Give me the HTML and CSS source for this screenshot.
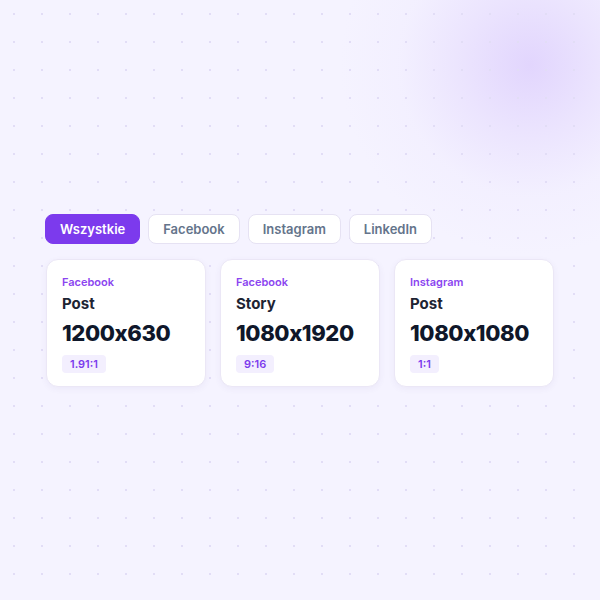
FILE: index.html
```html
<!DOCTYPE html>
<html lang="pl">
<head>
    <meta charset="UTF-8">
    <meta name="viewport" content="width=device-width, initial-scale=1.0">
    <title>Formaty grafik</title>
    <link rel="stylesheet" href="styles.css">
</head>
<body>
    <div class="container">
        <!-- Platform filter -->
        <div class="tabs">
            <button class="tab active">Wszystkie</button>
            <button class="tab">Facebook</button>
            <button class="tab">Instagram</button>
            <button class="tab">LinkedIn</button>
        </div>

        <!-- Format cards -->
        <div class="cards">
            <div class="card">
                <div class="platform">Facebook</div>
                <div class="kind">Post</div>
                <div class="size">1200x630</div>
                <span class="ratio">1.91:1</span>
            </div>
            <div class="card">
                <div class="platform">Facebook</div>
                <div class="kind">Story</div>
                <div class="size">1080x1920</div>
                <span class="ratio">9:16</span>
            </div>
            <div class="card">
                <div class="platform">Instagram</div>
                <div class="kind">Post</div>
                <div class="size">1080x1080</div>
                <span class="ratio">1:1</span>
            </div>
        </div>
    </div>
</body>
</html>
```

FILE: styles.css
```css
/* General styling */
body {
    font-family: 'Inter', 'Liberation Sans', sans-serif;
    background-color: #f5f3ff;
    /* dotted grid plus a soft glow in the top-right corner */
    background-image:
        radial-gradient(circle, #e2ddf6 1px, transparent 1.5px),
        radial-gradient(circle at 530px 65px, rgba(221, 206, 253, 0.8) 0px, rgba(226, 214, 253, 0.5) 70px, rgba(236, 230, 254, 0.25) 130px, rgba(245, 243, 255, 0) 190px);
    background-size: 28px 28px, 100% 100%;
    display: flex;
    justify-content: center;
    align-items: center;
    height: 100vh;
    margin: 0;
}

.container {
    width: 510px;
    padding-top: 1px;
}

/* Tabs */
.tabs {
    display: flex;
    gap: 8px;
    margin-bottom: 15px;
}

.tab {
    font-family: inherit;
    font-size: 13px;
    font-weight: 600;
    line-height: 16px;
    padding: 6px 14px;
    border: 1px solid #e6e2f3;
    border-radius: 8px;
    background-color: #ffffff;
    color: #64748b;
    cursor: pointer;
}

.tab.active {
    background-color: #7c3aed;
    border-color: #7c3aed;
    color: #ffffff;
}

/* Cards */
.cards {
    display: grid;
    grid-template-columns: repeat(3, 1fr);
    gap: 14px;
    margin: 0 1px;
}

.card {
    background-color: #ffffff;
    border: 1px solid #ebe7f6;
    border-radius: 12px;
    padding: 15px 15px 13px;
    box-shadow: 0 2px 6px rgba(91, 60, 160, 0.06);
}

.platform {
    font-size: 11px;
    font-weight: 600;
    line-height: 14px;
    color: #8b45f0;
    margin-bottom: 5px;
}

.kind {
    font-size: 15px;
    font-weight: 700;
    line-height: 20px;
    color: #1e2433;
    margin-bottom: 5px;
}

.size {
    font-size: 22px;
    font-weight: 800;
    line-height: 28px;
    color: #0f172a;
    letter-spacing: -0.4px;
    margin-bottom: 5px;
}

.ratio {
    display: inline-block;
    font-size: 11px;
    font-weight: 600;
    line-height: 18px;
    padding: 0 8px;
    border-radius: 4px;
    background-color: #f3effe;
    color: #7c3aed;
}
```
